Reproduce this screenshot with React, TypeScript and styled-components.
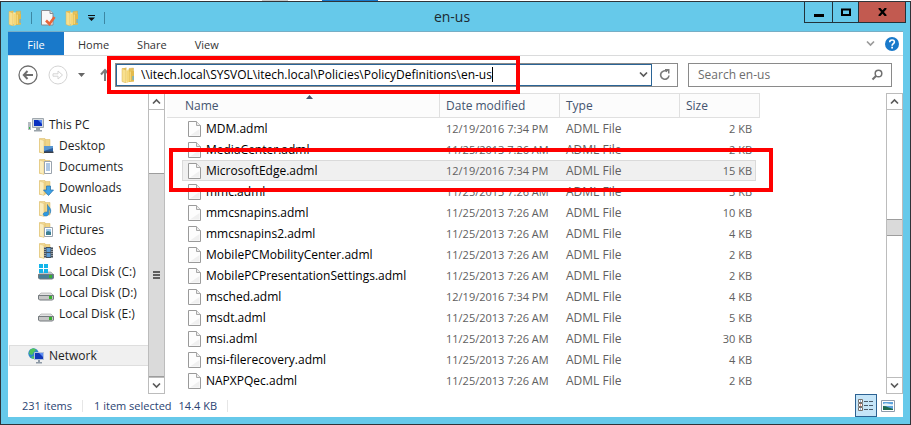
import React from "react";
import styled, { createGlobalStyle, css } from "styled-components";

const Global = createGlobalStyle`
  * { box-sizing: border-box; }
  body { margin: 0; background: #fff; }
  button, input { font: inherit; color: inherit; margin: 0; padding: 0; border: 0; background: none; border-radius: 0; outline: none; }
  svg { display: block; flex: none; }
`;

/* ---------- window frame ---------- */

const Desktop = styled.div`
  height: 100vh;
  display: flex;
  flex-direction: column;
  font: 12px/20px "Open Sans", "Noto Sans", sans-serif;
  color: #000;
`;
const BehindStrip = styled.div`
  height: 1px;
  flex: none;
  background: linear-gradient(to right, #fff 262px, #c8c8c8 262px 288px, #fff 288px 322px, #1979ca 322px 378px, #fff 378px);
`;
const Window = styled.section`
  flex: 1;
  min-height: 0;
  display: flex;
  flex-direction: column;
  border: 1px solid #2f3338;
  background: #66c9ea;
`;
const TitleBar = styled.header`
  flex: none;
  height: 29px;
  display: grid;
  grid-template-columns: 1fr auto 1fr;
  padding: 0 4px 0 7px;
`;
const QuickAccess = styled.div`
  display: flex;
  align-items: center;
  padding-top: 2px;
  gap: 9px;
`;
const ToolButton = styled.button`
  display: flex;
`;
const Divider = styled.span<{ $color?: string }>`
  width: 1px;
  height: 12px;
  background: ${(p) => p.$color ?? "#3c87a3"};
`;
const Title = styled.h1`
  margin: 0 10px 0 0;
  font-size: 14px;
  font-weight: 400;
  line-height: 30px;
  color: #1c2a30;
`;
const Controls = styled.div`
  display: flex;
  justify-self: end;
  align-self: start;
`;
const ControlButton = styled.button<{ $close?: boolean; $width: number }>`
  width: ${(p) => p.$width}px;
  height: 21px;
  display: flex;
  align-items: center;
  justify-content: center;
  border: solid #22323a;
  border-width: 0 0 1px 1px;
  background: ${(p) => (p.$close ? "#c25a50" : "transparent")};
  &:last-child { border-right-width: 1px; }
`;
const Client = styled.div`
  flex: 1;
  min-height: 0;
  margin: 0 7px 7px;
  background: #fff;
  border-top: 1px solid #77aec5;
  display: flex;
  flex-direction: column;
`;

/* ---------- ribbon ---------- */

const Ribbon = styled.nav`
  flex: none;
  height: 24px;
  display: flex;
  border-bottom: 1px solid #dadbdc;
`;
const Tab = styled.button<{ $active?: boolean }>`
  padding: 0 14px;
  height: 23px;
  font-size: 11px;
  line-height: 25px;
  color: #333;
  ${(p) =>
    p.$active &&
    css`
      width: 56px;
      background: #1979ca;
      color: #fff;
    `}
`;
const RibbonEnd = styled.div`
  margin-left: auto;
  display: flex;
  align-items: center;
  gap: 10px;
  padding-right: 4px;
`;

/* ---------- address row ---------- */

const AddressRow = styled.div`
  flex: none;
  height: 37px;
  display: flex;
  align-items: center;
  padding: 0 11px 0 10px;
`;
const NavButtons = styled.div`
  display: flex;
  align-items: center;
  gap: 10px;
  width: 97px;
  padding-right: 3px;
  flex: none;
  & > :last-child { margin-left: auto; }
`;
const AddressBox = styled.div`
  position: relative;
  flex: 1;
  min-width: 0;
  height: 24px;
  display: flex;
  border: 1px solid #8a8a8a;
`;
const AddressField = styled.label`
  flex: 1;
  min-width: 0;
  display: flex;
  align-items: center;
  border: 1px solid #2a6496;
  padding: 0 3px 0 4px;
`;
const PathInput = styled.input`
  field-sizing: content;
  margin-left: 6px;
  height: 18px;
`;
const Caret = styled.span`
  width: 1px;
  height: 15px;
  background: #000;
`;
const FieldEnd = styled.button`
  margin-left: auto;
`;
const Refresh = styled.button`
  width: 25px;
  display: flex;
  align-items: center;
  justify-content: center;
`;
const SearchBox = styled.label`
  flex: none;
  width: 204px;
  height: 24px;
  margin-left: 10px;
  padding: 0 8px 0 9px;
  border: 1px solid #8a8a8a;
  display: flex;
  align-items: center;
`;
const SearchInput = styled.input`
  flex: 1;
  min-width: 0;
  &::placeholder { color: #6d6d6d; opacity: 1; }
`;
const Marker = styled.div`
  position: absolute;
  border: 4px solid #f00;
  pointer-events: none;
  z-index: 2;
`;
const AddressMarker = styled(Marker)`
  left: -9px;
  top: -8px;
  width: 413px;
  height: 38px;
`;
const RowMarker = styled(Marker)`
  left: 2px;
  top: 55px;
  width: 604px;
  height: 44px;
`;

/* ---------- body ---------- */

const Body = styled.main`
  flex: 1;
  min-height: 0;
  display: flex;
`;
const Sidebar = styled.nav`
  flex: none;
  width: 140px;
  padding: 21px 0 0 1px;
  overflow: hidden;
`;
const TreeItem = styled.a<{ $child?: boolean; $selected?: boolean; $spaced?: boolean }>`
  height: 21px;
  display: flex;
  align-items: center;
  gap: 5px;
  color: #1e1e1e;
  text-decoration: none;
  white-space: nowrap;
  padding-left: ${(p) => (p.$child ? 28 : 18)}px;
  border: 1px solid ${(p) => (p.$selected ? "#dedede" : "transparent")};
  border-right: 0;
  background: ${(p) => (p.$selected ? "#f0f0f0" : "none")};
  margin-top: ${(p) => (p.$spaced ? 21 : 0)}px;
`;
const ScrollBar = styled.div`
  flex: none;
  width: 17px;
  display: flex;
  flex-direction: column;
  border: solid #bcbcbc;
  border-width: 0 1px;
`;
const ScrollButton = styled.button`
  height: 17px;
  flex: none;
  display: flex;
  align-items: center;
  justify-content: center;
  border: solid #bcbcbc;
  border-width: 1px 0;
`;
const Track = styled.div<{ $grow: number }>`
  flex: ${(p) => p.$grow} 1 0;
`;
const Thumb = styled.div<{ $grow?: number }>`
  flex: ${(p) => (p.$grow ? `${p.$grow} 1 0` : "0 0 17px")};
  display: flex;
  align-items: center;
  justify-content: center;
  background: #dadada;
  border: solid #9d9d9d;
  border-width: 1px 0;
`;
const FilePane = styled.div`
  position: relative;
  flex: 1;
  min-width: 0;
  margin-left: 2px;
`;
const FileClip = styled.div`
  height: 100%;
  overflow: hidden;
`;
const FileTable = styled.table`
  width: 593px;
  table-layout: fixed;
  border-collapse: separate;
  border-spacing: 0;
`;
const HeadCell = styled.th<{ $indent?: boolean }>`
  height: 25px;
  padding: 0 0 0 ${(p) => (p.$indent ? 18 : 6)}px;
  border: solid #e0e0e0;
  border-width: 1px 1px 1px 0;
  background: #fcfcfc;
  color: #44546f;
  font-weight: 400;
  text-align: left;
`;
const HeadLabel = styled.div`
  display: flex;
  position: relative;
`;
const SortMark = styled.svg`
  position: absolute;
  left: 121px;
  top: -1px;
`;
const Row = styled.tr<{ $selected?: boolean }>`
  ${(p) =>
    p.$selected &&
    css`
      & > td:not(:first-child):not(:last-child) {
        background: #f0f0f0;
        border-top-color: #dadada;
        border-bottom-color: #dadada;
      }
      & > td:nth-child(2) { border-left-color: #dadada; }
      & > td:nth-child(5) { border-right-color: #dadada; }
    `}
`;
const Cell = styled.td<{ $right?: boolean }>`
  height: 21px;
  padding: 0 3px 0 6px;
  font-size: 11px;
  line-height: 19px;
  border: 0 solid transparent;
  border-width: 1px 0;
  color: #606060;
  white-space: nowrap;
  text-align: ${(p) => (p.$right ? "right" : "left")};
  &:nth-child(5) { border-right-width: 1px; }
`;
const NameCell = styled(Cell)`
  border-left-width: 1px;
  padding: 0 0 0 5px;
  font-size: 12px;
  color: #000;
`;
const TypeCell = styled(Cell)`
  font-size: 12px;
`;
const NameInner = styled.div`
  height: 19px;
  display: flex;
  align-items: center;
  gap: 5px;
`;
const PadCell = styled(Cell)`
  padding: 0;
`;

/* ---------- status bar ---------- */

const StatusBar = styled.footer`
  flex: none;
  height: 23px;
  display: flex;
  align-items: center;
  padding: 0 8px 0 14px;
  font-size: 11px;
  color: #2b4372;
`;
const StatusText = styled.span`
  margin-right: 10px;
`;
const StatusItem = styled.span`
  margin: 0 7px 0 11px;
`;
const Views = styled.div`
  margin-left: auto;
  display: flex;
  align-items: center;
  gap: 4px;
`;
const ViewButton = styled.button<{ $active?: boolean }>`
  display: flex;
  align-items: center;
  justify-content: center;
  ${(p) =>
    p.$active &&
    css`
      width: 22px;
      height: 23px;
      border: 1px solid #2c6293;
      background: #c5e5f8;
    `}
`;

/* ---------- icons ---------- */

const Folder = () => (
  <svg width="14" height="16" viewBox="0 0 14 16">
    <path d="M1 1.500L5.500.5V14H1z" fill="#e3bd55" />
    <path d="M5 2.500h4V14H5z" fill="#fbeeb4" />
    <path d="M8 1.500L12.500 1v13H8z" fill="#e6c25c" stroke="#d0a53f" strokeWidth=".4" />
    <path d="M1 1.500l4 1.500v13l-4-1.500z" fill="#f8e08e" stroke="#d8b353" strokeWidth=".5" />
    <path d="M5.500 4L8 3v12l-2.500 1z" fill="#f5d778" />
    <path d="M8 4h5v10.500l-5 .5z" fill="#e2ba4d" />
    <path d="M8.500 4.500h1.500v9.500H8.500z" fill="#f2d67c" />
    <path d="M11.500 9h1.200v4h-1.200z" fill="#5bb2e6" />
  </svg>
);
const Properties = () => (
  <svg width="15" height="16" viewBox="0 0 15 16">
    <path d="M.5.5h8.500l3 3v11.500H.5z" fill="#f8f8f8" stroke="#868c92" />
    <path d="M9 .5v3h3" fill="#ddd" stroke="#868c92" />
    <path d="M5 10.500l3.500 3.500 5-7" fill="none" stroke="#e8653a" strokeWidth="2.600" />
  </svg>
);
const Customize = () => (
  <svg width="7" height="6" viewBox="0 0 7 6">
    <path d="M0 0h7v1H0zM0 2.500h7L3.500 6z" fill="#111" />
  </svg>
);
const Chevron = ({ up, color = "#5a5a5a" }: { up?: boolean; color?: string }) => (
  <svg width="9" height="7" viewBox="0 0 9 7">
    <path d={up ? "M1 5.500L4.500 2 8 5.500" : "M1 1.500L4.500 5 8 1.500"} fill="none" stroke={color} strokeWidth="1.700" />
  </svg>
);
const Help = () => (
  <svg width="14" height="14" viewBox="0 0 14 14">
    <circle cx="7" cy="7" r="7" fill="#1979ca" />
    <path d="M4.700 5.300C4.700 2.300 9.400 2.300 9.400 5c0 1.700-2.300 1.700-2.300 3.700" fill="none" stroke="#fff" strokeWidth="1.600" />
    <path d="M6.200 9.800h1.800v1.700H6.200z" fill="#fff" />
  </svg>
);
const CircleArrow = ({ forward }: { forward?: boolean }) => (
  <svg width="20" height="20" viewBox="0 0 20 20" fill="none" stroke={forward ? "#d4d4d4" : "#6e6e6e"}>
    <circle cx="10" cy="10" r="9" strokeWidth={forward ? 1 : 1.300} />
    {forward ? (
      <path d="M5 8.800h5V6l4.500 4-4.500 4v-2.800H5z" />
    ) : (
      <path d="M15 10H6M9.500 6L5.800 10l3.700 4" strokeWidth="2" />
    )}
  </svg>
);
const DropMark = () => (
  <svg width="7" height="4" viewBox="0 0 7 4">
    <path d="M0 0h7L3.500 4z" fill="#666" />
  </svg>
);
const UpArrow = () => (
  <svg width="12" height="13" viewBox="0 0 12 13">
    <path d="M5 13V2M1 6.500L5 2l4 4.500" fill="none" stroke="#7c7c7c" strokeWidth="2" />
  </svg>
);
const RefreshIcon = () => (
  <svg width="12" height="12" viewBox="0 0 12 12">
    <path d="M8.200 2.500A4.200 4.200 0 1 0 10 6.500" fill="none" stroke="#7a7a7a" strokeWidth="1.600" />
    <path d="M6 0h4.500v4.500H9V2H6z" fill="#7a7a7a" />
  </svg>
);
const Magnifier = () => (
  <svg width="12" height="12" viewBox="0 0 12 12" fill="none" stroke="#707070">
    <circle cx="7.500" cy="4.500" r="3.300" strokeWidth="1.500" />
    <path d="M5 7L1.500 10.500" strokeWidth="2" />
  </svg>
);
const Page = () => (
  <svg width="13" height="16" viewBox="0 0 13 16">
    <path d="M.5.5h8l4 4v11H.5z" fill="#fdfdfd" stroke="#9a9a9a" />
    <path d="M8.500.5v4h4" fill="#ececec" stroke="#a8a8a8" />
    <path d="M2 14.500h9.500V8z" fill="#f0f0f0" />
  </svg>
);
const Grip = () => (
  <svg width="7" height="8" viewBox="0 0 7 8">
    <path d="M0 0h7v2H0zM0 3h7v2H0zM0 6h7v2H0z" fill="#5e5e5e" />
  </svg>
);
const Computer = () => (
  <svg width="16" height="14" viewBox="0 0 16 14">
    <path d="M0 4h3v8H0z" fill="#b5bcc2" />
    <path d="M1 9h1v2H1z" fill="#35b34a" />
    <path d="M4.500.5h11v9h-11z" fill="#d5dade" stroke="#a0a8ae" />
    <path d="M6 2h8v6H6z" fill="#0a2fc0" />
    <path d="M10 2h4v4z" fill="#5b8af0" />
    <path d="M8 10h4v2h2v1.500H6V12h2z" fill="#9aa3aa" />
  </svg>
);
const overlays: Record<string, React.ReactNode> = {
  desktop: (
    <>
      <path d="M6 8h9v6H6z" fill="#2d5f9f" />
      <path d="M6 8h9v2l-9 3z" fill="#5a97d2" />
      <path d="M6 13.500h9.500V15H6z" fill="#3b4048" />
    </>
  ),
  documents: (
    <>
      <path d="M6.500 2.500h7v12h-7z" fill="#fff" stroke="#9aa3ad" />
      <path d="M8 5h4M8 7h4M8 9h4M8 11h4" stroke="#5c8fc9" />
    </>
  ),
  downloads: <path d="M8.500 6h4v4h3l-5 5.500-5-5.500h3z" fill="#3fa2e6" stroke="#1f6fae" strokeWidth=".7" />,
  music: (
    <path d="M9.500 3.500C10 6 14.500 7 12 12.500c.5-3-.5-4-1.300-4.200V13c-.3 2.500-5.500 3-5.500.3 0-1.700 2-2.600 4.300-2.300z" fill="#2e9ae0" stroke="#1f6fae" strokeWidth=".5" />
  ),
  pictures: (
    <>
      <path d="M6.500 5.500h8v9h-8z" fill="#fff" stroke="#9aa3ad" />
      <path d="M8 7h5v3H8z" fill="#9cc9ec" />
      <path d="M8 10l2-1 3 1v3H8z" fill="#3d7f92" />
    </>
  ),
  videos: (
    <>
      <path d="M6 4h9v11H6z" fill="#44505c" />
      <path d="M8.500 5h4v4h-4zM8.500 10h4v4h-4z" fill="#5b9bd5" />
      <path d="M7 4v11M14 4v11" stroke="#e5e5e5" strokeDasharray="1 1" />
    </>
  ),
};
const LibraryFolder = ({ kind }: { kind: string }) => (
  <svg width="16" height="16" viewBox="0 0 16 16">
    <path d="M6 1.500h6V14H6z" fill="#f0d588" stroke="#d9b75e" strokeWidth=".5" />
    <path d="M1.500 .5H7v14H1.500z" fill="#f3dc98" stroke="#d9b75e" strokeWidth=".5" />
    <path d="M1.500 1L6 2.500v13L1.500 14z" fill="#fbedbd" stroke="#dcbd6a" strokeWidth=".5" />
    {overlays[kind]}
  </svg>
);
const Disk = ({ system }: { system?: boolean }) => (
  <svg width="16" height="16" viewBox="0 0 16 16">
    {system && <path d="M1 0h4v4H1zM6 0h4v4H6zM1 5h4v4H1zM6 5h4v4H6z" fill="#13b5ea" />}
    <path d="M3 8h10l3 3H0z" fill={system ? "#b9c8d0" : "#e2e2e2"} stroke="#9a9a9a" strokeWidth=".6" />
    {system && <path d="M1 0h4v4H1zM6 0h4v4H6zM1 5h4v4H1zM6 5h4v4H6z" fill="#13b5ea" />}
    <path d="M.5 10.500h15V14l-1 1h-13l-1-1z" fill={system ? "#477f96" : "#c6c6c6"} stroke="#747a7e" />
    <path d="M11 11h3v3h-3z" fill="#38b030" />
  </svg>
);
const NetworkIcon = () => (
  <svg width="16" height="16" viewBox="0 0 16 16">
    <circle cx="5.500" cy="5.500" r="5.200" fill="#2f86c9" />
    <path d="M2 2c2-2 5-2 6 0L6 4 4 7 1 6zM3 9l3-1 1 2-2 1z" fill="#4fc45a" />
    <path d="M6.500 4.500h9v7h-9z" fill="#1238b8" stroke="#b4c3da" />
    <path d="M11 5h4v4z" fill="#5f8df2" />
    <path d="M10 12h2v2h2v1.500H8V14h2z" fill="#8e9aa6" />
  </svg>
);
const DetailsIcon = () => (
  <svg width="16" height="13" viewBox="0 0 16 13">
    <g fill="#fff" stroke="#77706c">
      <path d="M.5.5h4v3h-4zM.5 4.500h4v3h-4zM.5 8.500h4v3h-4z" />
    </g>
    <path d="M2 1.500h1v1H2zM2 9.500h1v1H2z" fill="#2f6fb5" />
    <path d="M2 5.500h1v1H2z" fill="#d03d2a" />
    <path d="M6 2.500h4m1 0h4M6 6.500h4m1 0h4M6 10.500h4m1 0h4" stroke="#4a5a6b" />
  </svg>
);
const ThumbIcon = () => (
  <svg width="14" height="12" viewBox="0 0 14 12">
    <path d="M.5.5h13v11H.5z" fill="#fff" stroke="#8f9bab" />
    <path d="M2 2h10v8H2z" fill="#5da3dd" />
    <path d="M2 4c4-2 7 1 10 0v2H2z" fill="#e4f2fa" />
    <path d="M2 6c4 0 6 2 10 3v1H2z" fill="#1f6b50" />
  </svg>
);

/* ---------- data ---------- */

const OLD = "11/25/2013 7:26 AM";
const NEW = "12/19/2016 7:34 PM";
const files: [string, string, string][] = [
  ["MDM.adml", NEW, "2 KB"],
  ["MediaCenter.adml", OLD, "2 KB"],
  ["MicrosoftEdge.adml", NEW, "15 KB"],
  ["mmc.adml", OLD, "3 KB"],
  ["mmcsnapins.adml", OLD, "10 KB"],
  ["mmcsnapins2.adml", OLD, "4 KB"],
  ["MobilePCMobilityCenter.adml", OLD, "2 KB"],
  ["MobilePCPresentationSettings.adml", OLD, "2 KB"],
  ["msched.adml", NEW, "4 KB"],
  ["msdt.adml", OLD, "5 KB"],
  ["msi.adml", OLD, "30 KB"],
  ["msi-filerecovery.adml", OLD, "4 KB"],
  ["NAPXPQec.adml", OLD, "2 KB"],
];
const libraries = ["Desktop", "Documents", "Downloads", "Music", "Pictures", "Videos"];

export default function App() {
  return (
    <Desktop>
      <Global />
      <BehindStrip />
      <Window>
        <TitleBar>
          <QuickAccess>
            <Folder />
            <Divider />
            <ToolButton aria-label="Properties"><Properties /></ToolButton>
            <ToolButton aria-label="New folder"><Folder /></ToolButton>
            <ToolButton aria-label="Customize toolbar"><Customize /></ToolButton>
            <Divider />
          </QuickAccess>
          <Title>en-us</Title>
          <Controls>
            <ControlButton $width={28} aria-label="Minimize">
              <svg width="10" height="9"><path d="M0 6h10v3H0z" /></svg>
            </ControlButton>
            <ControlButton $width={26} aria-label="Maximize">
              <svg width="10" height="8"><path d="M1 1.500h8v5.500H1z" fill="none" stroke="#000" strokeWidth="2" /></svg>
            </ControlButton>
            <ControlButton $width={48} $close aria-label="Close">
              <svg width="9" height="8"><path d="M1 0l7 8M8 0L1 8" stroke="#000" strokeWidth="2.200" /></svg>
            </ControlButton>
          </Controls>
        </TitleBar>
        <Client>
          <Ribbon>
            <Tab $active>File</Tab>
            <Tab>Home</Tab>
            <Tab>Share</Tab>
            <Tab>View</Tab>
            <RibbonEnd>
              <ToolButton aria-label="Expand ribbon"><Chevron color="#9a9a9a" /></ToolButton>
              <ToolButton aria-label="Help"><Help /></ToolButton>
            </RibbonEnd>
          </Ribbon>
          <AddressRow>
            <NavButtons>
              <ToolButton aria-label="Back"><CircleArrow /></ToolButton>
              <ToolButton aria-label="Forward"><CircleArrow forward /></ToolButton>
              <ToolButton aria-label="Recent locations"><DropMark /></ToolButton>
              <ToolButton aria-label="Up"><UpArrow /></ToolButton>
            </NavButtons>
            <AddressBox>
              <AddressField>
                <Folder />
                <PathInput aria-label="Address" defaultValue={"\\\\itech.local\\SYSVOL\\itech.local\\Policies\\PolicyDefinitions\\en-us"} />
                <Caret />
                <FieldEnd aria-label="Previous locations"><Chevron /></FieldEnd>
              </AddressField>
              <Refresh aria-label="Refresh"><RefreshIcon /></Refresh>
              <AddressMarker />
            </AddressBox>
            <SearchBox>
              <SearchInput placeholder="Search en-us" aria-label="Search en-us" />
              <Magnifier />
            </SearchBox>
          </AddressRow>
          <Body>
            <Sidebar>
              <TreeItem href="#pc"><Computer />This PC</TreeItem>
              {libraries.map((name) => (
                <TreeItem key={name} href={`#${name}`} $child>
                  <LibraryFolder kind={name.toLowerCase()} />
                  {name}
                </TreeItem>
              ))}
              {["C", "D", "E"].map((d) => (
                <TreeItem key={d} href={`#${d}`} $child>
                  <Disk system={d === "C"} />
                  Local Disk ({d}:)
                </TreeItem>
              ))}
              <TreeItem href="#network" $selected $spaced><NetworkIcon />Network</TreeItem>
            </Sidebar>
            <ScrollBar>
              <ScrollButton aria-label="Scroll up"><Chevron up /></ScrollButton>
              <Track $grow={63} />
              <Thumb $grow={204}><Grip /></Thumb>
              <ScrollButton aria-label="Scroll down"><Chevron /></ScrollButton>
            </ScrollBar>
            <FilePane>
              <FileClip>
                <FileTable>
                  <colgroup>
                    <col style={{ width: 15 }} />
                    <col style={{ width: 258 }} />
                    <col style={{ width: 120 }} />
                    <col style={{ width: 120 }} />
                    <col style={{ width: 76 }} />
                    <col style={{ width: 4 }} />
                  </colgroup>
                  <thead>
                    <tr>
                      <HeadCell colSpan={2} $indent>
                        <HeadLabel>
                          Name
                          <SortMark width="7" height="4" viewBox="0 0 7 4"><path d="M0 4h7L3.500 0z" fill="#44546f" /></SortMark>
                        </HeadLabel>
                      </HeadCell>
                      <HeadCell>Date modified</HeadCell>
                      <HeadCell>Type</HeadCell>
                      <HeadCell colSpan={2}>Size</HeadCell>
                    </tr>
                  </thead>
                  <tbody>
                    {files.map(([name, date, size]) => (
                      <Row key={name} $selected={name === "MicrosoftEdge.adml"}>
                        <PadCell />
                        <NameCell><NameInner><Page />{name}</NameInner></NameCell>
                        <Cell>{date}</Cell>
                        <TypeCell>ADML File</TypeCell>
                        <Cell $right>{size}</Cell>
                        <PadCell />
                      </Row>
                    ))}
                    <Row>
                      <PadCell />
                      <NameCell><NameInner><Page /></NameInner></NameCell>
                    </Row>
                  </tbody>
                </FileTable>
              </FileClip>
              <RowMarker />
            </FilePane>
            <ScrollBar>
              <ScrollButton aria-label="Scroll up"><Chevron up /></ScrollButton>
              <Track $grow={109} />
              <Thumb />
              <Track $grow={141} />
              <ScrollButton aria-label="Scroll down"><Chevron /></ScrollButton>
            </ScrollBar>
          </Body>
          <StatusBar>
            <StatusText>231 items</StatusText>
            <Divider $color="#e6e6e6" />
            <StatusItem>1 item selected</StatusItem>
            <StatusText>14.4 KB</StatusText>
            <Divider $color="#e6e6e6" />
            <Views>
              <ViewButton $active aria-label="Details view"><DetailsIcon /></ViewButton>
              <ViewButton aria-label="Thumbnail view"><ThumbIcon /></ViewButton>
            </Views>
          </StatusBar>
        </Client>
      </Window>
    </Desktop>
  );
}
